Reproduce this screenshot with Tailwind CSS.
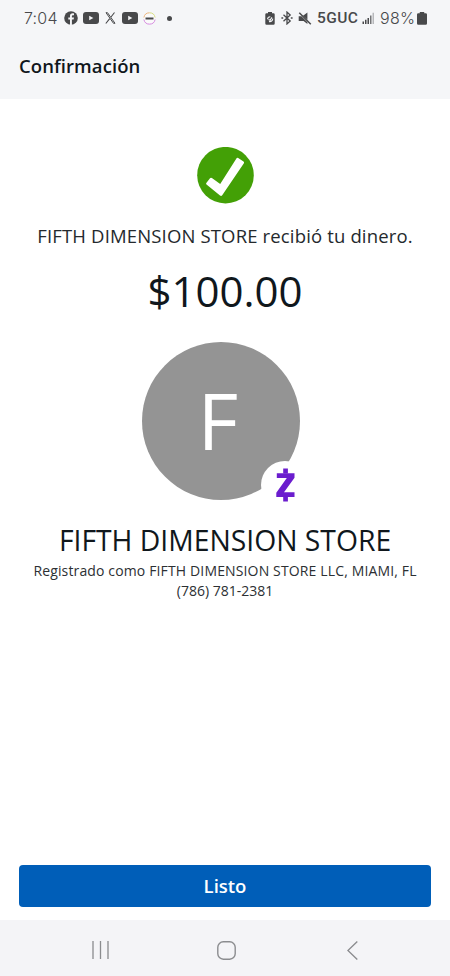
<!DOCTYPE html>
<html lang="es">
<head>
<meta charset="utf-8">
<meta name="viewport" content="width=device-width, initial-scale=1">
<title>Confirmación</title>
<script src="https://cdn.jsdelivr.net/npm/@tailwindcss/browser@4"></script>
</head>
<body class="bg-white">
<div class="flex h-[976px] w-[450px] flex-col overflow-hidden bg-white font-['Open_Sans',sans-serif] text-[#10171c]">
  <!-- Status bar -->
  <div class="flex h-9 shrink-0 items-center bg-[#f5f6f8] pl-6 pr-[23px] font-['Roboto',sans-serif] text-[#48494b]">
    <span class="w-[40px] whitespace-nowrap font-['Inter',sans-serif] text-[16px] leading-9 font-light tracking-[0.2px]">7:04</span>
    <svg class="size-[14px] shrink-0" viewBox="0 0 14 14"><circle cx="7" cy="7" r="6.8" fill="#48494b"/><path d="M7.9 14V8.4h1.7l.4-2H7.9V5.3c0-.7.4-1.1 1.2-1.1H10V2.5c-2.6-.5-4 .5-4 2.5v1.4H4.300v2H6V14z" fill="#f5f6f8"/></svg>
    <svg class="ml-[5px] h-3 w-4 shrink-0" viewBox="0 0 16 12"><rect width="16" height="12" rx="3" fill="#48494b"/><path d="M6.200 3.700v4.600L10.400 6z" fill="#f5f6f8"/></svg>
    <svg class="ml-[6px] h-3 w-[11px] shrink-0" viewBox="0 0 11 12" fill="none" stroke="#48494b"><path d="M1 .7h1.500L10 11.300H8.500z" stroke-width="1"/><path d="M9.500.5 6 5M4.700 6.700.8 11.500" stroke-width="1.100"/></svg>
    <svg class="ml-[6px] h-3 w-4 shrink-0" viewBox="0 0 16 12"><rect width="16" height="12" rx="3" fill="#48494b"/><path d="M6.200 3.700v4.600L10.400 6z" fill="#f5f6f8"/></svg>
    <svg class="ml-[5px] size-[13px] shrink-0" viewBox="0 0 13 13" fill="none"><circle cx="6.500" cy="6.500" r="5.700" fill="#fafafa"/><path d="M.9 5.500A5.700 5.700 0 0 1 6.500.8" stroke="#edb57d"/><path d="M6.500.8a5.700 5.700 0 0 1 5.600 4.700" stroke="#d9df83"/><path d="M.9 7.500a5.700 5.700 0 0 0 11.200 0" stroke="#d68be0"/><path d="M2.500 6.500h8" stroke="#48494b" stroke-width="2"/></svg>
    <span class="ml-[11px] size-[5px] shrink-0 rounded-full bg-[#48494b]"></span>
    <div class="ml-auto flex items-center">
      <svg class="h-[13px] w-[10px]" viewBox="0 0 10 13"><path d="M3 0h4v1.300h1.500q1.200 0 1.200 1.200v9q0 1.200-1.200 1.200h-7Q.3 12.700.3 11.500v-9q0-1.200 1.200-1.200H3z" fill="#48494b"/><path d="M2.500 7.300A2.800 2.800 0 0 1 5.300 4.800M7.700 6.600A2.800 2.800 0 0 1 4 9.500M3.500 7.500 5 8.300 7 5.400" fill="none" stroke="#f5f6f8" stroke-width="1.100"/></svg>
      <svg class="ml-[6px] h-[14px] w-3" viewBox="0 0 12 14" fill="none" stroke="#48494b" stroke-width="1.300"><path d="m2.500 3.700 6.700 6.200L6 12.900V1.100l3.200 3L2.500 10.300"/><path d="M.4 7h1.800M9.800 7h1.800"/></svg>
      <svg class="ml-[5px] h-[13px] w-[14px]" viewBox="0 0 14 13"><path d="M.7 4.200h2.700l6 6V12L5.600 9H.7zM5 3.700 9.400.6v7.200z" fill="#48494b"/><path d="m1.300.8 11.500 11.400" stroke="#48494b" stroke-width="1.500"/></svg>
      <span class="ml-[5px] w-[42px] whitespace-nowrap text-[15.5px] leading-9 font-medium tracking-[0.4px]">5GUC</span>
      <svg class="ml-[3px] h-3 w-[13px]" viewBox="0 0 13 12" fill="#48494b"><path d="M.5 9.500H2V12H.5zM3 7.800h1.500V12H3zM5.500 6H7v6H5.500z"/><path d="M8 3.500h1.500V12H8z" fill="#747577"/><path d="M10.500.8H12V12h-1.500z" fill="#b7b8bb"/></svg>
      <span class="ml-[5px] w-[37px] whitespace-nowrap font-['Inter',sans-serif] text-[16px] leading-9 font-light tracking-[0.3px]">98%</span>
      <svg class="h-[13px] w-[10px]" viewBox="0 0 9 13" preserveAspectRatio="none" fill="#48494b"><path d="M2.500 0h4v1.300h1.300Q9 1.300 9 2.500v9q0 1.200-1.200 1.200H1.200Q0 12.700 0 11.500v-9q0-1.200 1.200-1.200h1.300z"/></svg>
    </div>
  </div>

  <!-- Title -->
  <header class="h-[63px] shrink-0 bg-[#f5f6f8] pt-[17px] pl-[19px]">
    <h1 class="whitespace-nowrap text-[18.5px] leading-[26px] font-semibold tracking-[0.08px]">Confirmación</h1>
  </header>

  <!-- Payment summary -->
  <main class="flex flex-1 flex-col items-center pt-12">
    <svg class="size-[57px] shrink-0" viewBox="0 0 57 57"><circle cx="28.500" cy="28.200" r="28.300" fill="#43a006"/><path d="M9.300 36 13 31.200q.8-1 1.900-.2l8.300 5.900L39.400 11.400q.7-1.100 1.800-.4l5.300 3.500q1 .7.400 1.700L25.200 48.200q-.9 1.200-2.200.3L9.500 37.500q-.8-.7-.2-1.500z" fill="#fff"/></svg>
    <p class="mt-[19px] whitespace-nowrap text-[18.5px] leading-[26px] tracking-[0.15px] text-[#24292d]">FIFTH DIMENSION STORE recibió tu dinero.</p>
    <p class="mt-[14px] whitespace-nowrap text-[42px] leading-[56px]">$100.00</p>
    <div class="relative mt-[23px] mr-[8px] size-[158px] shrink-0">
      <div class="flex size-full items-center justify-center rounded-full bg-[#949494] pr-[6px] pb-[3px]">
        <span class="text-[79px] leading-[110px] font-medium text-white">F</span>
      </div>
      <div class="absolute top-[119px] left-[119px] flex size-[48px] items-center justify-center rounded-full bg-white">
        <svg class="h-[34px] w-[19px]" viewBox="0 0 19 34" fill="#6b1dce"><path d="M.8 5.200h17.700v4.600L8 24.200h10.500v4.700H.3v-4.200L10.800 9.900H.8z"/><path d="M7.200.5h4.700v5H7.200zM7.200 28.500h4.700v5H7.200z"/></svg>
      </div>
    </div>
    <h2 class="mt-[21px] whitespace-nowrap text-[28.300px] leading-[38px]">FIFTH DIMENSION STORE</h2>
    <p class="mt-[2px] whitespace-nowrap text-[14px] leading-5 tracking-[0.14px] text-[#2c3033]">Registrado como FIFTH DIMENSION STORE LLC, MIAMI, FL</p>
    <p class="whitespace-nowrap text-[14px] leading-5 text-[#2c3033]">(786) 781-2381</p>
    <button class="mt-auto mb-[13px] h-[42px] w-[412px] shrink-0 rounded-[4px] bg-[#005eb8] text-[18.5px] leading-[26px] font-semibold text-white">Listo</button>
  </main>

  <!-- System navigation -->
  <nav class="flex h-14 shrink-0 items-center bg-[#f4f4f7] pt-1 pl-[91px]">
    <svg class="h-[18px] w-[19px]" viewBox="0 0 19 18" stroke="#8b8c8f" stroke-width="1.300"><path d="M2 0v18M9.500 0v18M17 0v18"/></svg>
    <svg class="ml-[107px] size-[19px]" viewBox="0 0 19 19" fill="none" stroke="#8b8c8f" stroke-width="1.400"><rect x=".8" y=".8" width="17.400" height="17.400" rx="5.500"/></svg>
    <svg class="ml-[111px] h-[19px] w-[11px]" viewBox="0 0 11 19" fill="none" stroke="#8b8c8f" stroke-width="1.400"><path d="M10.300.6.9 9.500l9.400 8.900"/></svg>
  </nav>
</div>
</body>
</html>
